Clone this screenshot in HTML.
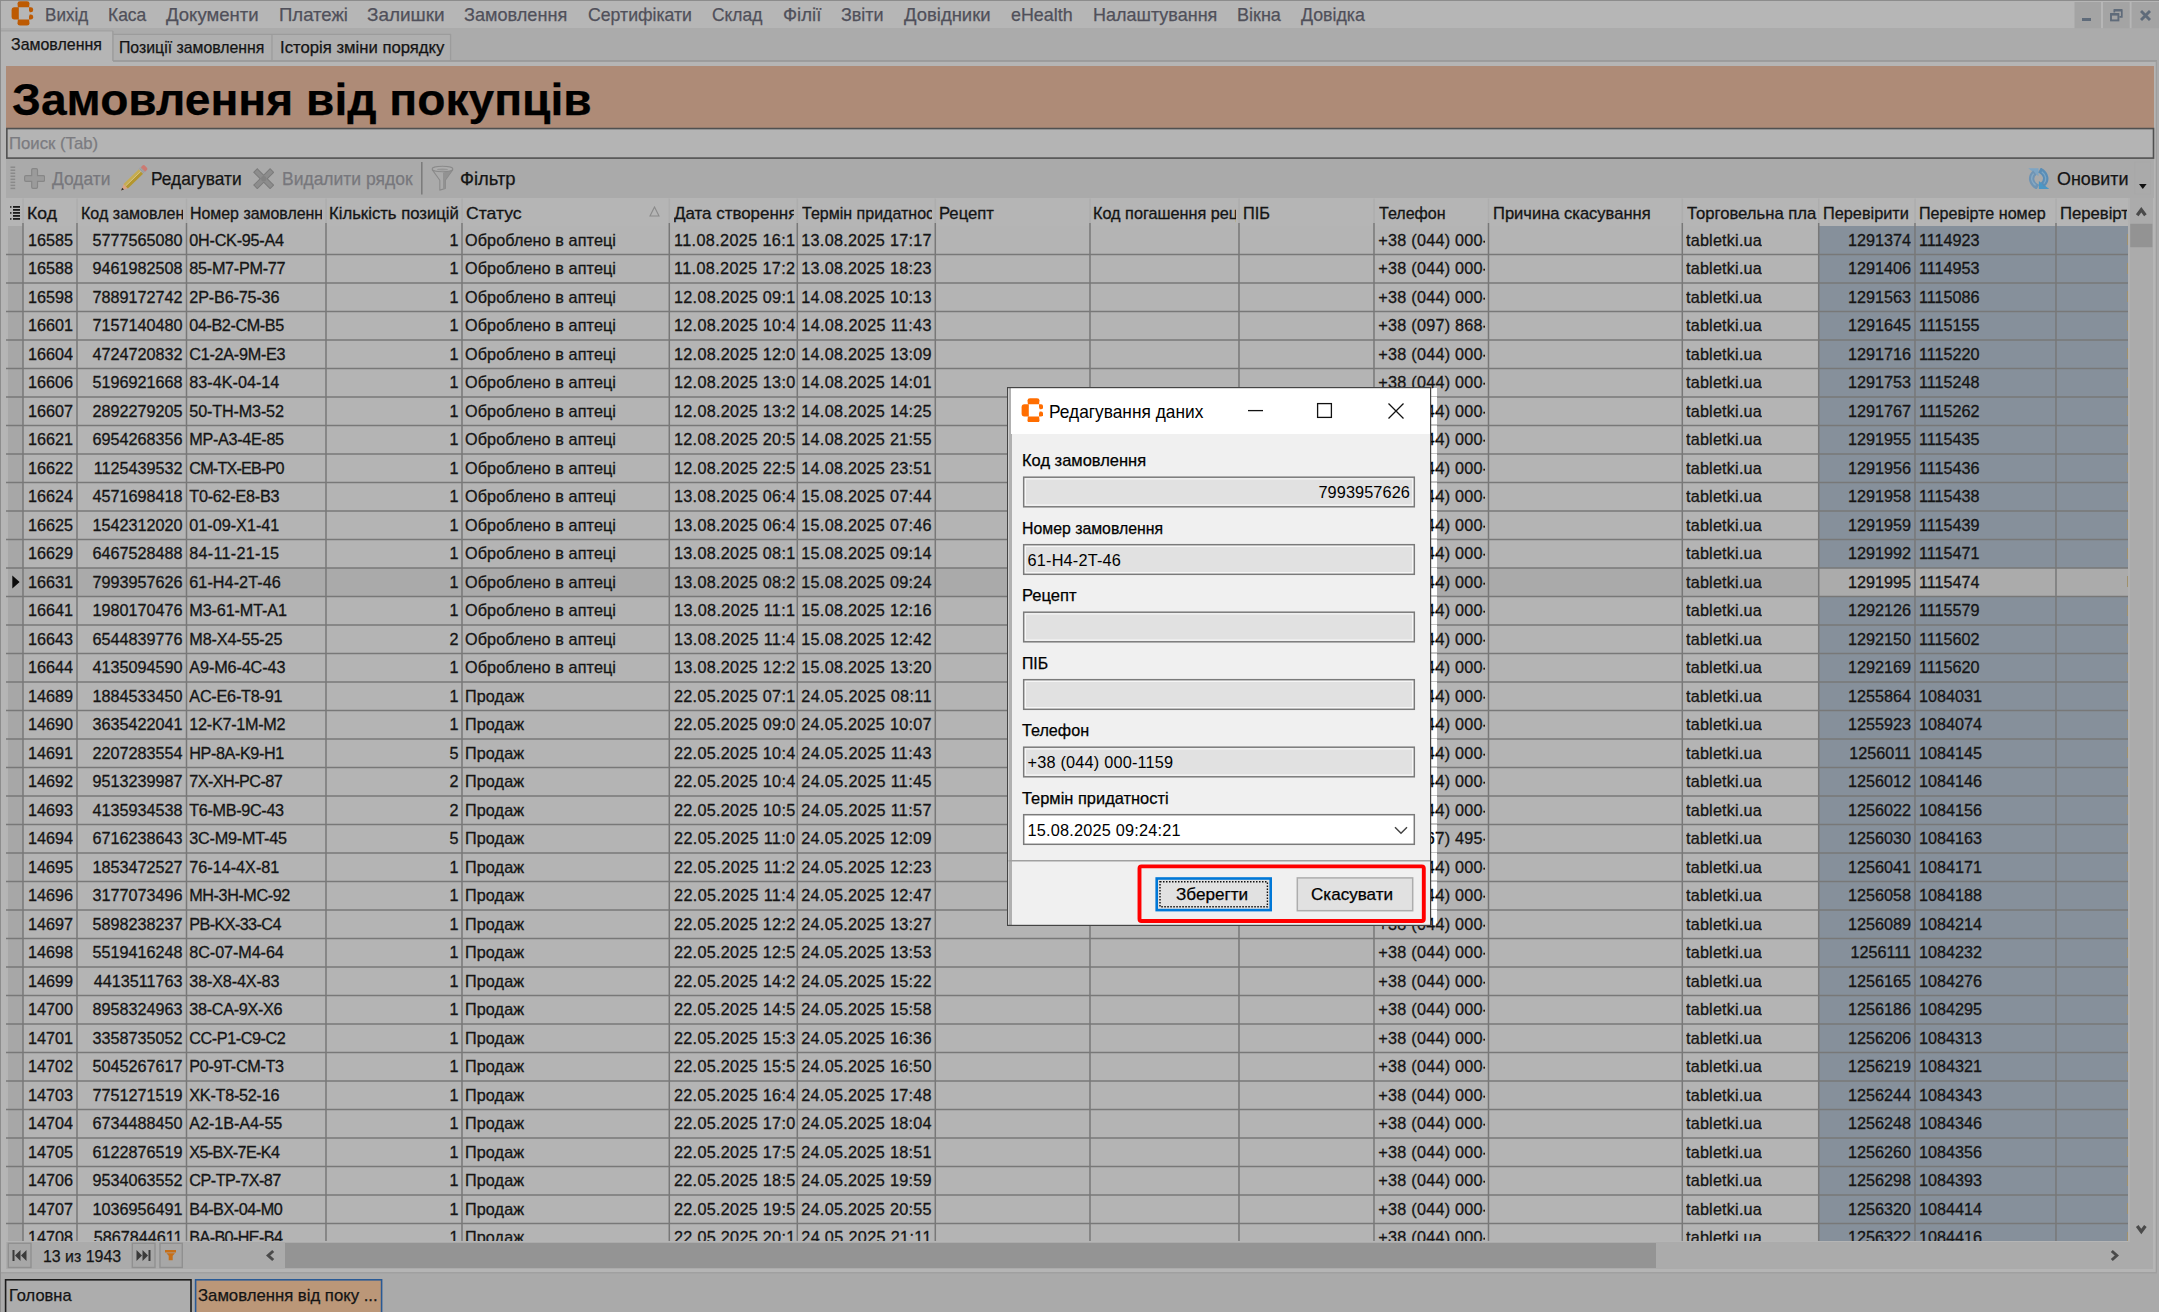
<!DOCTYPE html>
<html><head><meta charset="utf-8"><title>Замовлення від покупців</title>
<style>
html,body{margin:0;padding:0;}
body{width:2159px;height:1312px;overflow:hidden;background:#ababab;font-family:"Liberation Sans",sans-serif;color:#141414;position:relative;}
.a{position:absolute;white-space:pre;}
.t{-webkit-text-stroke:0.3px currentColor;position:absolute;white-space:pre;overflow:hidden;font-size:16.2px;line-height:20px;height:20px;transform:scaleY(1.035);transform-origin:0 55%;}
.r{text-align:right;}
.h{position:absolute;white-space:pre;font-size:16.2px;line-height:20px;overflow:hidden;height:22px;}
.lbl{position:absolute;white-space:pre;font-size:16.3px;line-height:20px;left:1022px;color:#000;}
.inp{position:absolute;left:1024px;width:390px;height:29px;box-sizing:border-box;background:#e1e1e1;font-size:16.3px;line-height:29px;color:#000;white-space:pre;}
</style></head><body>

<div class="a" style="left:0;top:0;width:2159px;height:28px;background:#b6b6b6"></div>
<svg class="a" style="left:11.4px;top:1.2px" width="22.4" height="24.8" viewBox="-0.2 -0.2 22.4 24.8"><g fill="#bd5a02">
<path d="M8.800 0h7q2.500 0 2.500 2.300L17.900 6.100H6.700L6.300 2.300Q6.300 0 8.800 0z"/>
<path d="M8.800 24.400h7q2.500 0 2.500-2.300l-0.400-3.800H6.700L6.300 22.100q0 2.300 2.500 2.300z"/>
<path d="M0.400 9q0-2.900 2.700-2.900h4.500v12.200H3.100Q0.400 18.300 0.400 15.400z"/>
<path d="M17.800 6.100h1.800q2.400 0 2.400 2.300v0.500q0 2.200-2.400 2.200h-1.100l-0.700-2z"/>
<path d="M17.800 18.300h1.800q2.400 0 2.400-2.300v-0.500q0-2.200-2.400-2.200h-1.100l-0.700 2z"/>
</g></svg>
<span class="a" style="left:44.90px;top:3.20px;font-size:18.4px;line-height:24px;color:#50505a;font-weight:400;transform:scaleX(0.9278);transform-origin:0 0;-webkit-text-stroke:0.25px currentColor;">Вихід</span>
<span class="a" style="left:107.50px;top:3.20px;font-size:18.4px;line-height:24px;color:#50505a;font-weight:400;transform:scaleX(0.9486);transform-origin:0 0;-webkit-text-stroke:0.25px currentColor;">Каса</span>
<span class="a" style="left:165.90px;top:3.20px;font-size:18.4px;line-height:24px;color:#50505a;font-weight:400;transform:scaleX(1.0081);transform-origin:0 0;-webkit-text-stroke:0.25px currentColor;">Документи</span>
<span class="a" style="left:278.50px;top:3.20px;font-size:18.4px;line-height:24px;color:#50505a;font-weight:400;transform:scaleX(1.0087);transform-origin:0 0;-webkit-text-stroke:0.25px currentColor;">Платежі</span>
<span class="a" style="left:366.50px;top:3.20px;font-size:18.4px;line-height:24px;color:#50505a;font-weight:400;transform:scaleX(1.0289);transform-origin:0 0;-webkit-text-stroke:0.25px currentColor;">Залишки</span>
<span class="a" style="left:464.20px;top:3.20px;font-size:18.4px;line-height:24px;color:#50505a;font-weight:400;transform:scaleX(0.9857);transform-origin:0 0;-webkit-text-stroke:0.25px currentColor;">Замовлення</span>
<span class="a" style="left:587.50px;top:3.20px;font-size:18.4px;line-height:24px;color:#50505a;font-weight:400;transform:scaleX(0.9610);transform-origin:0 0;-webkit-text-stroke:0.25px currentColor;">Сертифікати</span>
<span class="a" style="left:712.20px;top:3.20px;font-size:18.4px;line-height:24px;color:#50505a;font-weight:400;transform:scaleX(0.9449);transform-origin:0 0;-webkit-text-stroke:0.25px currentColor;">Склад</span>
<span class="a" style="left:782.50px;top:3.20px;font-size:18.4px;line-height:24px;color:#50505a;font-weight:400;transform:scaleX(1.0079);transform-origin:0 0;-webkit-text-stroke:0.25px currentColor;">Філії</span>
<span class="a" style="left:840.90px;top:3.20px;font-size:18.4px;line-height:24px;color:#50505a;font-weight:400;transform:scaleX(0.9755);transform-origin:0 0;-webkit-text-stroke:0.25px currentColor;">Звіти</span>
<span class="a" style="left:903.50px;top:3.20px;font-size:18.4px;line-height:24px;color:#50505a;font-weight:400;transform:scaleX(1.0042);transform-origin:0 0;-webkit-text-stroke:0.25px currentColor;">Довідники</span>
<span class="a" style="left:1010.90px;top:3.20px;font-size:18.4px;line-height:24px;color:#50505a;font-weight:400;transform:scaleX(0.9718);transform-origin:0 0;-webkit-text-stroke:0.25px currentColor;">eHealth</span>
<span class="a" style="left:1092.50px;top:3.20px;font-size:18.4px;line-height:24px;color:#50505a;font-weight:400;transform:scaleX(0.9779);transform-origin:0 0;-webkit-text-stroke:0.25px currentColor;">Налаштування</span>
<span class="a" style="left:1236.90px;top:3.20px;font-size:18.4px;line-height:24px;color:#50505a;font-weight:400;transform:scaleX(0.9800);transform-origin:0 0;-webkit-text-stroke:0.25px currentColor;">Вікна</span>
<span class="a" style="left:1300.90px;top:3.20px;font-size:18.4px;line-height:24px;color:#50505a;font-weight:400;transform:scaleX(0.9659);transform-origin:0 0;-webkit-text-stroke:0.25px currentColor;">Довідка</span>
<svg class="a" style="left:0;top:0;pointer-events:none" width="2159" height="1312" viewBox="0 0 2159 1312" fill="none"><path d="M0 0.4H2159" stroke="#8c8c8c" stroke-width="1.2"/><path d="M0.4 0V1312" stroke="#8a8a8a" stroke-width="1.0"/><rect x="2074.5" y="2" width="26.5" height="26.2" stroke="none" stroke-width="0" fill="#a4a4a4" rx="0"/><rect x="2103" y="2" width="26.699999999999818" height="26.2" stroke="none" stroke-width="0" fill="#a4a4a4" rx="0"/><rect x="2131.6" y="2" width="27.40000000000009" height="26.2" stroke="none" stroke-width="0" fill="#a4a4a4" rx="0"/></svg>
<div class="a" style="left:2082px;top:17.5px;width:9px;height:3px;background:#5f6b7a"></div>
<svg class="a" style="left:2110px;top:8.500px" width="13" height="13" viewBox="0 0 13 13" fill="none" stroke="#5f6b7a">
<path d="M4.300 3.600V1.200h7.5v6.600H9.400" stroke-width="1.700"/><path d="M4 1.300h8" stroke-width="2.400"/><rect x="1" y="5" width="7.400" height="6.400" stroke-width="1.900"/><path d="M0.500 5.400h8.400" stroke-width="2.400"/></svg>
<svg class="a" style="left:2140px;top:10px" width="11" height="11" viewBox="0 0 11 11" stroke="#5f6b7a" stroke-width="2.900"><path d="M1 1l9 9M10 1L1 10"/></svg>
<div class="a" style="left:1px;top:61px;width:2155.5px;height:1211px;background:#b5b5b5"></div>
<div class="a" style="left:1px;top:31px;width:112px;height:32px;background:#b5b5b5"></div>
<div class="a" style="left:113.5px;top:35px;width:337px;height:25.5px;background:#afafaf"></div>
<span class="a" style="left:11.10px;top:34.90px;font-size:15.7px;line-height:20px;color:#141414;font-weight:400;transform:scaleX(1.0169);transform-origin:0 0;-webkit-text-stroke:0.25px currentColor;">Замовлення</span>
<span class="a" style="left:118.50px;top:38.10px;font-size:15.7px;line-height:20px;color:#141414;font-weight:400;transform:scaleX(1.0085);transform-origin:0 0;-webkit-text-stroke:0.25px currentColor;">Позиції замовлення</span>
<span class="a" style="left:280.40px;top:38.10px;font-size:15.7px;line-height:20px;color:#141414;font-weight:400;transform:scaleX(1.0638);transform-origin:0 0;-webkit-text-stroke:0.25px currentColor;">Історія зміни порядку</span>
<div class="a" style="left:6px;top:66px;width:2148px;height:62px;background:#ae8b77"></div>
<span class="a" style="left:11.80px;top:73.60px;font-size:44.7px;line-height:52px;color:#000;font-weight:700;transform:scaleX(1.0330);transform-origin:0 0;-webkit-text-stroke:0.25px currentColor;">Замовлення від покупців</span>
<div class="a" style="left:6px;top:128px;width:2148px;height:30px;background:#b4b4b4"></div>
<svg class="a" style="left:0;top:0;pointer-events:none" width="2159" height="1312" viewBox="0 0 2159 1312" fill="none"><path d="M113 60.9H2157" stroke="#969696" stroke-width="1.5"/><path d="M2156.4 61V1272" stroke="#9e9e9e" stroke-width="1.4"/><path d="M1 1272.8H2157" stroke="#a0a0a0" stroke-width="1.5"/><path d="M1 30.9H113" stroke="#a2a2a2" stroke-width="1.2"/><path d="M112.9 31V61" stroke="#9a9a9a" stroke-width="1.3"/><path d="M113 34.4H451" stroke="#9c9c9c" stroke-width="1.3"/><path d="M272 34V61" stroke="#9c9c9c" stroke-width="1.3"/><path d="M450.6 34V61" stroke="#9c9c9c" stroke-width="1.3"/><rect x="6.85" y="128.55" width="2146.65" height="29.549999999999983" stroke="#505050" stroke-width="1.6" fill="none" rx="0"/></svg>
<span class="a" style="left:9.20px;top:132.70px;font-size:16.2px;line-height:20px;color:#7b7b80;font-weight:400;transform:scaleX(1.0332);transform-origin:0 0;-webkit-text-stroke:0.25px currentColor;">Поиск (Tab)</span>
<div class="a" style="left:6px;top:158.7px;width:2148px;height:39px;background:#aaaaaa"></div>
<svg class="a" style="left:23.800px;top:167.900px" width="21.200" height="21" viewBox="0 0 21.200 21"><path d="M9 0.600h3.200q1.300 0 1.300 1.300v5.800h5.800q1.300 0 1.300 1.300v3q0 1.300-1.300 1.300h-5.800v5.800q0 1.300-1.300 1.300H9q-1.300 0-1.300-1.300v-5.800H1.900q-1.300 0-1.300-1.300V9q0-1.300 1.300-1.300h5.800V1.900Q7.700 0.600 9 0.600z" fill="#9b9b9b" stroke="#878787" stroke-width="1.200"/></svg>
<span class="a" style="left:52.40px;top:166.00px;font-size:18.0px;line-height:26px;color:#77777c;font-weight:400;transform:scaleX(0.9663);transform-origin:0 0;-webkit-text-stroke:0.25px currentColor;">Додати</span>
<svg class="a" style="left:116px;top:162px" width="36" height="34" viewBox="116 162 36 34"><g transform="translate(121.100 190.600) rotate(-43.900)">
<path d="M0 0L6.500 -3V3z" fill="#dba383"/><path d="M0 0L2.800 -1.300V1.300z" fill="#2e2e2e"/>
<rect x="6.400" y="-3.100" width="21.200" height="3.100" fill="#c6ad52"/><rect x="6.400" y="0" width="21.200" height="3.100" fill="#b4962e"/>
<path d="M6.400 -0.200H27.600" stroke="#d8c682" stroke-width="0.900"/>
<rect x="27.500" y="-3.100" width="3" height="6.200" fill="#a9a9a9"/><path d="M28.500 -3.100v6.200M29.800 -3.100v6.200" stroke="#8d8d8d" stroke-width="0.600"/>
<path d="M30.400 -3.100h2.400q1.700 0 1.700 1.700v2.800q0 1.700-1.700 1.700h-2.400z" fill="#cc7a72"/>
</g></svg>
<span class="a" style="left:151.20px;top:166.00px;font-size:18.0px;line-height:26px;color:#141414;font-weight:400;transform:scaleX(0.9619);transform-origin:0 0;-webkit-text-stroke:0.25px currentColor;">Редагувати</span>
<svg class="a" style="left:253.100px;top:167.800px" width="21.400" height="21.400" viewBox="0 0 21.400 21.400"><path d="M4.300 4.300L17.100 17.100M17.100 4.300L4.300 17.100" stroke="#7c7c7c" stroke-width="6" stroke-linecap="square"/><path d="M4.300 4.300L17.100 17.100M17.100 4.300L4.300 17.100" stroke="#8d8d8d" stroke-width="4" stroke-linecap="square"/><circle cx="10.700" cy="10.700" r="2.600" fill="#828282"/></svg>
<span class="a" style="left:282.20px;top:166.00px;font-size:18.0px;line-height:26px;color:#77777c;font-weight:400;transform:scaleX(0.9718);transform-origin:0 0;-webkit-text-stroke:0.25px currentColor;">Видалити рядок</span>
<svg class="a" style="left:430px;top:164px" width="26" height="28" viewBox="430 164 26 28">
<path d="M432.200 169.600L439.800 180.300V190.100L445.300 188.500V180.300L452.800 169.600" fill="#aaaaaa" stroke="#8a8a8a" stroke-width="1.100" stroke-linejoin="round"/>
<path d="M443 172.400L452.200 170.500 445.300 180.300V188.300L443 188.900z" fill="#8e8e8e" opacity=".85"/>
<ellipse cx="442.500" cy="169" rx="10.400" ry="2.700" fill="#adadad" stroke="#8a8a8a" stroke-width="1.100"/>
<ellipse cx="442.500" cy="169.500" rx="5.400" ry="0.900" fill="#969696"/>
</svg>
<span class="a" style="left:460.20px;top:166.00px;font-size:18.0px;line-height:26px;color:#141414;font-weight:400;transform:scaleX(1.0216);transform-origin:0 0;-webkit-text-stroke:0.25px currentColor;">Фільтр</span>
<svg class="a" style="left:2027.800px;top:167.900px" width="21.400" height="21.400" viewBox="0 0 21.400 21.400">
<g><path d="M0.300 0.300H10.500V8.200z" fill="#7da5c4"/><path d="M6.800 4.600C2 8.400 2.400 15.200 9.900 19.200" stroke="#6f94b4" stroke-width="5.400" fill="none"/><path d="M5.600 5.600C2.600 9 3 14 7.600 17.400" stroke="#86a9c4" stroke-width="1.400" fill="none"/></g>
<g transform="rotate(180 10.700 10.600)"><path d="M0.300 0.300H10.500V8.200z" fill="#4a97c6"/><path d="M6.800 4.600C2 8.400 2.400 15.200 9.900 19.200" stroke="#5a8db6" stroke-width="5.400" fill="none"/><path d="M5.600 5.600C2.600 9 3 14 7.600 17.400" stroke="#7aa6c6" stroke-width="1.400" fill="none"/></g>
</svg>
<span class="a" style="left:2057.20px;top:166.00px;font-size:18.0px;line-height:26px;color:#141414;font-weight:400;transform:scaleX(0.9962);transform-origin:0 0;-webkit-text-stroke:0.25px currentColor;">Оновити</span>
<svg class="a" style="left:0;top:0;pointer-events:none" width="2159" height="1312" viewBox="0 0 2159 1312" fill="none"><path d="M10.5 167.2H15.2" stroke="#8a8a8a" stroke-width="1.5"/><path d="M10.5 170.23H15.2" stroke="#8a8a8a" stroke-width="1.5"/><path d="M10.5 173.26H15.2" stroke="#8a8a8a" stroke-width="1.5"/><path d="M10.5 176.29H15.2" stroke="#8a8a8a" stroke-width="1.5"/><path d="M10.5 179.32H15.2" stroke="#8a8a8a" stroke-width="1.5"/><path d="M10.5 182.35H15.2" stroke="#8a8a8a" stroke-width="1.5"/><path d="M10.5 185.38H15.2" stroke="#8a8a8a" stroke-width="1.5"/><path d="M10.5 188.41H15.2" stroke="#8a8a8a" stroke-width="1.5"/><path d="M421.8 162V194.5" stroke="#7a7a7a" stroke-width="1.5"/><rect x="2134.8" y="162" width="15.899999999999636" height="32" stroke="#a8a8a8" stroke-width="1" fill="none" rx="0"/><path d="M2139 184h7.600L2142.800 189z" fill="#111"/></svg>
<div class="a" style="left:6px;top:197.5px;width:2122.3px;height:1043.5px;background:#b4b4b4;overflow:hidden" id="grid">
<div class="a" style="left:0;top:0;width:2122.3px;height:28.099999999999994px;background:#b5b5b5"></div>
<div class="a" style="left:1.5px;top:28.099999999999994px;width:15px;height:1015.4px;background:#a7a7a7"></div>
<div class="a" style="left:1813px;top:28.099999999999994px;width:309.3000000000002px;height:1015.4px;background:#86909b"></div>
<div class="a" style="left:17px;top:370.1px;width:1796px;height:28.5px;background:#aaaaaa"></div>
<div class="a" style="left:1813px;top:370.1px;width:309.3000000000002px;height:28.5px;background:#ababab"></div>
<svg class="a" style="left:0;top:0" width="2122.3" height="1043.5" viewBox="0 0 2122.3 1043.5" fill="none" stroke="#787878" stroke-width="1.5"><path d="M0 56.60H2122.3M0 85.10H2122.3M0 113.60H2122.3M0 142.10H2122.3M0 170.60H2122.3M0 199.10H2122.3M0 227.60H2122.3M0 256.10H2122.3M0 284.60H2122.3M0 313.10H2122.3M0 341.60H2122.3M0 370.10H2122.3M0 398.60H2122.3M0 427.10H2122.3M0 455.60H2122.3M0 484.10H2122.3M0 512.60H2122.3M0 541.10H2122.3M0 569.60H2122.3M0 598.10H2122.3M0 626.60H2122.3M0 655.10H2122.3M0 683.60H2122.3M0 712.10H2122.3M0 740.60H2122.3M0 769.10H2122.3M0 797.60H2122.3M0 826.10H2122.3M0 854.60H2122.3M0 883.10H2122.3M0 911.60H2122.3M0 940.10H2122.3M0 968.60H2122.3M0 997.10H2122.3M0 1025.60H2122.3M0 1054.10H2122.3M17.00 25.10V1043.5M71.00 25.10V1043.5M180.50 25.10V1043.5M320.00 25.10V1043.5M456.00 25.10V1043.5M663.30 25.10V1043.5M791.30 25.10V1043.5M929.30 25.10V1043.5M1084.00 25.10V1043.5M1233.00 25.10V1043.5M1368.00 25.10V1043.5M1482.50 25.10V1043.5M1676.30 25.10V1043.5M1812.70 25.10V1043.5M1909.00 25.10V1043.5M2050.00 25.10V1043.5"/><path d="M17.00 0.5V25.10M71.00 0.5V25.10M180.50 0.5V25.10M320.00 0.5V25.10M456.00 0.5V25.10M663.30 0.5V25.10M791.30 0.5V25.10M929.30 0.5V25.10M1084.00 0.5V25.10M1233.00 0.5V25.10M1368.00 0.5V25.10M1482.50 0.5V25.10M1676.30 0.5V25.10M1812.70 0.5V25.10M1909.00 0.5V25.10M2050.00 0.5V25.10" stroke="#adadad" stroke-width="1.5"/></svg>
<div class="a" style="left:20.90px;top:5.199999999999989px;width:32.10px;height:22px;overflow:hidden"><span class="a" style="left:0;top:0;font-size:16.2px;line-height:20px;transform:scale(1.0860,1.035);transform-origin:0 55%;-webkit-text-stroke:0.3px currentColor">Код</span></div>
<div class="a" style="left:74.90px;top:5.199999999999989px;width:101.70px;height:22px;overflow:hidden"><span class="a" style="left:0;top:0;font-size:16.2px;line-height:20px;transform:scale(0.9923,1.035);transform-origin:0 55%;-webkit-text-stroke:0.3px currentColor">Код замовлен</span></div>
<div class="a" style="left:184.20px;top:5.199999999999989px;width:131.40px;height:22px;overflow:hidden"><span class="a" style="left:0;top:0;font-size:16.2px;line-height:20px;transform:scale(0.9827,1.035);transform-origin:0 55%;-webkit-text-stroke:0.3px currentColor">Номер замовленн</span></div>
<div class="a" style="left:323.20px;top:5.199999999999989px;width:132.10px;height:22px;overflow:hidden"><span class="a" style="left:0;top:0;font-size:16.2px;line-height:20px;transform:scale(1.0311,1.035);transform-origin:0 55%;-webkit-text-stroke:0.3px currentColor">Кількість позицій</span></div>
<div class="a" style="left:459.90px;top:5.199999999999989px;width:57.80px;height:22px;overflow:hidden"><span class="a" style="left:0;top:0;font-size:16.2px;line-height:20px;transform:scale(1.0865,1.035);transform-origin:0 55%;-webkit-text-stroke:0.3px currentColor">Статус</span></div>
<div class="a" style="left:668.00px;top:5.199999999999989px;width:119.60px;height:22px;overflow:hidden"><span class="a" style="left:0;top:0;font-size:16.2px;line-height:20px;transform:scale(1.0456,1.035);transform-origin:0 55%;-webkit-text-stroke:0.3px currentColor">Дата створення</span></div>
<div class="a" style="left:795.70px;top:5.199999999999989px;width:130.00px;height:22px;overflow:hidden"><span class="a" style="left:0;top:0;font-size:16.2px;line-height:20px;transform:scale(0.9895,1.035);transform-origin:0 55%;-webkit-text-stroke:0.3px currentColor">Термін придатнос</span></div>
<div class="a" style="left:932.80px;top:5.199999999999989px;width:57.10px;height:22px;overflow:hidden"><span class="a" style="left:0;top:0;font-size:16.2px;line-height:20px;transform:scale(1.0286,1.035);transform-origin:0 55%;-webkit-text-stroke:0.3px currentColor">Рецепт</span></div>
<div class="a" style="left:1087.20px;top:5.199999999999989px;width:142.80px;height:22px;overflow:hidden"><span class="a" style="left:0;top:0;font-size:16.2px;line-height:20px;transform:scale(1.0024,1.035);transform-origin:0 55%;-webkit-text-stroke:0.3px currentColor">Код погашення рец</span></div>
<div class="a" style="left:1237.20px;top:5.199999999999989px;width:29.10px;height:22px;overflow:hidden"><span class="a" style="left:0;top:0;font-size:16.2px;line-height:20px;transform:scale(1.0050,1.035);transform-origin:0 55%;-webkit-text-stroke:0.3px currentColor">ПІБ</span></div>
<div class="a" style="left:1373.20px;top:5.199999999999989px;width:68.80px;height:22px;overflow:hidden"><span class="a" style="left:0;top:0;font-size:16.2px;line-height:20px;transform:scale(0.9917,1.035);transform-origin:0 55%;-webkit-text-stroke:0.3px currentColor">Телефон</span></div>
<div class="a" style="left:1486.50px;top:5.199999999999989px;width:159.80px;height:22px;overflow:hidden"><span class="a" style="left:0;top:0;font-size:16.2px;line-height:20px;transform:scale(1.0208,1.035);transform-origin:0 55%;-webkit-text-stroke:0.3px currentColor">Причина скасування</span></div>
<div class="a" style="left:1680.50px;top:5.199999999999989px;width:131.50px;height:22px;overflow:hidden"><span class="a" style="left:0;top:0;font-size:16.2px;line-height:20px;transform:scale(1.0295,1.035);transform-origin:0 55%;-webkit-text-stroke:0.3px currentColor">Торговельна пла</span></div>
<div class="a" style="left:1817.20px;top:5.199999999999989px;width:88.10px;height:22px;overflow:hidden"><span class="a" style="left:0;top:0;font-size:16.2px;line-height:20px;transform:scale(1.0065,1.035);transform-origin:0 55%;-webkit-text-stroke:0.3px currentColor">Перевірити</span></div>
<div class="a" style="left:1913.20px;top:5.199999999999989px;width:128.80px;height:22px;overflow:hidden"><span class="a" style="left:0;top:0;font-size:16.2px;line-height:20px;transform:scale(0.9945,1.035);transform-origin:0 55%;-webkit-text-stroke:0.3px currentColor">Перевірте номер</span></div>
<div class="a" style="left:2053.90px;top:5.199999999999989px;width:67.40px;height:22px;overflow:hidden"><span class="a" style="left:0;top:0;font-size:16.2px;line-height:20px;transform:scale(1.0298,1.035);transform-origin:0 55%;-webkit-text-stroke:0.3px currentColor">Перевірт</span></div>
<svg class="a" style="left:4px;top:8.5px" width="11" height="14" viewBox="0 0 11 14" fill="#1a1a1a"><rect x="3" y="0" width="7" height="1.800"/><rect x="3" y="3" width="7" height="1.800"/><rect x="3" y="6" width="7" height="1.800"/><rect x="3" y="9" width="7" height="1.800"/><rect x="3" y="12" width="7" height="1.800"/><rect x="0" y="0.200" width="1.500" height="1.500"/><rect x="0" y="6.200" width="1.500" height="1.500"/><rect x="0" y="12.200" width="1.500" height="1.500"/></svg>
<svg class="a" style="left:643px;top:8.5px" width="11" height="11" viewBox="0 0 11 11"><path d="M5.500 1L10 10H1z" fill="none" stroke="#8a8a8a" stroke-width="1.100"/></svg>
<span class="t r" style="left:19.0px;top:32.0px;width:48px">16585</span>
<span class="t r" style="left:73.0px;top:32.0px;width:103.5px">5777565080</span>
<span class="t" style="left:183.3px;top:32.0px;width:136px;letter-spacing:-0.243px">0H-CK-95-A4</span>
<span class="t r" style="left:322.0px;top:32.0px;width:130.5px">1</span>
<span class="t" style="left:459.0px;top:32.0px;width:200px;letter-spacing:0.1px">Оброблено в аптеці</span>
<span class="t" style="left:668.0px;top:32.0px;width:122.5px;letter-spacing:0.378px">11.08.2025 16:1</span>
<span class="t" style="left:795.3px;top:32.0px;width:134px;letter-spacing:0.279px">13.08.2025 17:17</span>
<span class="t" style="left:1372.3px;top:32.0px;width:106.6px;overflow:hidden;letter-spacing:0.25px">+38 (044) 000-</span>
<span class="t" style="left:1680.0px;top:32.0px;width:130px;letter-spacing:0.2px">tabletki.ua</span>
<span class="t r" style="left:1815.0px;top:32.0px;width:90px">1291374</span>
<span class="t" style="left:1913.0px;top:32.0px;width:130px">1114923</span>
<div class="a" style="left:2120.9px;top:36.8px;width:1.4px;height:11px;background:#a0916c"></div>
<span class="t r" style="left:19.0px;top:60.6px;width:48px">16588</span>
<span class="t r" style="left:73.0px;top:60.6px;width:103.5px">9461982508</span>
<span class="t" style="left:183.3px;top:60.6px;width:136px;letter-spacing:-0.268px">85-M7-PM-77</span>
<span class="t r" style="left:322.0px;top:60.6px;width:130.5px">1</span>
<span class="t" style="left:459.0px;top:60.6px;width:200px;letter-spacing:0.1px">Оброблено в аптеці</span>
<span class="t" style="left:668.0px;top:60.6px;width:122.5px;letter-spacing:0.378px">11.08.2025 17:2</span>
<span class="t" style="left:795.3px;top:60.6px;width:134px;letter-spacing:0.279px">13.08.2025 18:23</span>
<span class="t" style="left:1372.3px;top:60.6px;width:106.6px;overflow:hidden;letter-spacing:0.25px">+38 (044) 000-</span>
<span class="t" style="left:1680.0px;top:60.6px;width:130px;letter-spacing:0.2px">tabletki.ua</span>
<span class="t r" style="left:1815.0px;top:60.6px;width:90px">1291406</span>
<span class="t" style="left:1913.0px;top:60.6px;width:130px">1114953</span>
<div class="a" style="left:2120.9px;top:65.4px;width:1.4px;height:11px;background:#a0916c"></div>
<span class="t r" style="left:19.0px;top:89.1px;width:48px">16598</span>
<span class="t r" style="left:73.0px;top:89.1px;width:103.5px">7889172742</span>
<span class="t" style="left:183.3px;top:89.1px;width:136px;letter-spacing:-0.163px">2P-B6-75-36</span>
<span class="t r" style="left:322.0px;top:89.1px;width:130.5px">1</span>
<span class="t" style="left:459.0px;top:89.1px;width:200px;letter-spacing:0.1px">Оброблено в аптеці</span>
<span class="t" style="left:668.0px;top:89.1px;width:122.5px;letter-spacing:0.298px">12.08.2025 09:1</span>
<span class="t" style="left:795.3px;top:89.1px;width:134px;letter-spacing:0.279px">14.08.2025 10:13</span>
<span class="t" style="left:1372.3px;top:89.1px;width:106.6px;overflow:hidden;letter-spacing:0.25px">+38 (044) 000-</span>
<span class="t" style="left:1680.0px;top:89.1px;width:130px;letter-spacing:0.2px">tabletki.ua</span>
<span class="t r" style="left:1815.0px;top:89.1px;width:90px">1291563</span>
<span class="t" style="left:1913.0px;top:89.1px;width:130px">1115086</span>
<div class="a" style="left:2120.9px;top:93.9px;width:1.4px;height:11px;background:#a0916c"></div>
<span class="t r" style="left:19.0px;top:117.6px;width:48px">16601</span>
<span class="t r" style="left:73.0px;top:117.6px;width:103.5px">7157140480</span>
<span class="t" style="left:183.3px;top:117.6px;width:136px;letter-spacing:-0.405px">04-B2-CM-B5</span>
<span class="t r" style="left:322.0px;top:117.6px;width:130.5px">1</span>
<span class="t" style="left:459.0px;top:117.6px;width:200px;letter-spacing:0.1px">Оброблено в аптеці</span>
<span class="t" style="left:668.0px;top:117.6px;width:122.5px;letter-spacing:0.298px">12.08.2025 10:4</span>
<span class="t" style="left:795.3px;top:117.6px;width:134px;letter-spacing:0.354px">14.08.2025 11:43</span>
<span class="t" style="left:1372.3px;top:117.6px;width:106.6px;overflow:hidden;letter-spacing:0.25px">+38 (097) 868-</span>
<span class="t" style="left:1680.0px;top:117.6px;width:130px;letter-spacing:0.2px">tabletki.ua</span>
<span class="t r" style="left:1815.0px;top:117.6px;width:90px">1291645</span>
<span class="t" style="left:1913.0px;top:117.6px;width:130px">1115155</span>
<div class="a" style="left:2120.9px;top:122.4px;width:1.4px;height:11px;background:#a0916c"></div>
<span class="t r" style="left:19.0px;top:146.1px;width:48px">16604</span>
<span class="t r" style="left:73.0px;top:146.1px;width:103.5px">4724720832</span>
<span class="t" style="left:183.3px;top:146.1px;width:136px;letter-spacing:-0.268px">C1-2A-9M-E3</span>
<span class="t r" style="left:322.0px;top:146.1px;width:130.5px">1</span>
<span class="t" style="left:459.0px;top:146.1px;width:200px;letter-spacing:0.1px">Оброблено в аптеці</span>
<span class="t" style="left:668.0px;top:146.1px;width:122.5px;letter-spacing:0.298px">12.08.2025 12:0</span>
<span class="t" style="left:795.3px;top:146.1px;width:134px;letter-spacing:0.279px">14.08.2025 13:09</span>
<span class="t" style="left:1372.3px;top:146.1px;width:106.6px;overflow:hidden;letter-spacing:0.25px">+38 (044) 000-</span>
<span class="t" style="left:1680.0px;top:146.1px;width:130px;letter-spacing:0.2px">tabletki.ua</span>
<span class="t r" style="left:1815.0px;top:146.1px;width:90px">1291716</span>
<span class="t" style="left:1913.0px;top:146.1px;width:130px">1115220</span>
<div class="a" style="left:2120.9px;top:150.9px;width:1.4px;height:11px;background:#a0916c"></div>
<span class="t r" style="left:19.0px;top:174.6px;width:48px">16606</span>
<span class="t r" style="left:73.0px;top:174.6px;width:103.5px">5196921668</span>
<span class="t" style="left:183.3px;top:174.6px;width:136px;letter-spacing:0.0px">83-4K-04-14</span>
<span class="t r" style="left:322.0px;top:174.6px;width:130.5px">1</span>
<span class="t" style="left:459.0px;top:174.6px;width:200px;letter-spacing:0.1px">Оброблено в аптеці</span>
<span class="t" style="left:668.0px;top:174.6px;width:122.5px;letter-spacing:0.298px">12.08.2025 13:0</span>
<span class="t" style="left:795.3px;top:174.6px;width:134px;letter-spacing:0.279px">14.08.2025 14:01</span>
<span class="t" style="left:1372.3px;top:174.6px;width:106.6px;overflow:hidden;letter-spacing:0.25px">+38 (044) 000-</span>
<span class="t" style="left:1680.0px;top:174.6px;width:130px;letter-spacing:0.2px">tabletki.ua</span>
<span class="t r" style="left:1815.0px;top:174.6px;width:90px">1291753</span>
<span class="t" style="left:1913.0px;top:174.6px;width:130px">1115248</span>
<div class="a" style="left:2120.9px;top:179.4px;width:1.4px;height:11px;background:#a0916c"></div>
<span class="t r" style="left:19.0px;top:203.1px;width:48px">16607</span>
<span class="t r" style="left:73.0px;top:203.1px;width:103.5px">2892279205</span>
<span class="t" style="left:183.3px;top:203.1px;width:136px;letter-spacing:-0.159px">50-TH-M3-52</span>
<span class="t r" style="left:322.0px;top:203.1px;width:130.5px">1</span>
<span class="t" style="left:459.0px;top:203.1px;width:200px;letter-spacing:0.1px">Оброблено в аптеці</span>
<span class="t" style="left:668.0px;top:203.1px;width:122.5px;letter-spacing:0.298px">12.08.2025 13:2</span>
<span class="t" style="left:795.3px;top:203.1px;width:134px;letter-spacing:0.279px">14.08.2025 14:25</span>
<span class="t" style="left:1372.3px;top:203.1px;width:106.6px;overflow:hidden;letter-spacing:0.25px">+38 (044) 000-</span>
<span class="t" style="left:1680.0px;top:203.1px;width:130px;letter-spacing:0.2px">tabletki.ua</span>
<span class="t r" style="left:1815.0px;top:203.1px;width:90px">1291767</span>
<span class="t" style="left:1913.0px;top:203.1px;width:130px">1115262</span>
<div class="a" style="left:2120.9px;top:207.9px;width:1.4px;height:11px;background:#a0916c"></div>
<span class="t r" style="left:19.0px;top:231.6px;width:48px">16621</span>
<span class="t r" style="left:73.0px;top:231.6px;width:103.5px">6954268356</span>
<span class="t" style="left:183.3px;top:231.6px;width:136px;letter-spacing:-0.324px">MP-A3-4E-85</span>
<span class="t r" style="left:322.0px;top:231.6px;width:130.5px">1</span>
<span class="t" style="left:459.0px;top:231.6px;width:200px;letter-spacing:0.1px">Оброблено в аптеці</span>
<span class="t" style="left:668.0px;top:231.6px;width:122.5px;letter-spacing:0.298px">12.08.2025 20:5</span>
<span class="t" style="left:795.3px;top:231.6px;width:134px;letter-spacing:0.279px">14.08.2025 21:55</span>
<span class="t" style="left:1372.3px;top:231.6px;width:106.6px;overflow:hidden;letter-spacing:0.25px">+38 (044) 000-</span>
<span class="t" style="left:1680.0px;top:231.6px;width:130px;letter-spacing:0.2px">tabletki.ua</span>
<span class="t r" style="left:1815.0px;top:231.6px;width:90px">1291955</span>
<span class="t" style="left:1913.0px;top:231.6px;width:130px">1115435</span>
<div class="a" style="left:2120.9px;top:236.4px;width:1.4px;height:11px;background:#a0916c"></div>
<span class="t r" style="left:19.0px;top:260.1px;width:48px">16622</span>
<span class="t r" style="left:73.0px;top:260.1px;width:103.5px">1125439532</span>
<span class="t" style="left:183.3px;top:260.1px;width:136px;letter-spacing:-0.812px">CM-TX-EB-P0</span>
<span class="t r" style="left:322.0px;top:260.1px;width:130.5px">1</span>
<span class="t" style="left:459.0px;top:260.1px;width:200px;letter-spacing:0.1px">Оброблено в аптеці</span>
<span class="t" style="left:668.0px;top:260.1px;width:122.5px;letter-spacing:0.298px">12.08.2025 22:5</span>
<span class="t" style="left:795.3px;top:260.1px;width:134px;letter-spacing:0.279px">14.08.2025 23:51</span>
<span class="t" style="left:1372.3px;top:260.1px;width:106.6px;overflow:hidden;letter-spacing:0.25px">+38 (044) 000-</span>
<span class="t" style="left:1680.0px;top:260.1px;width:130px;letter-spacing:0.2px">tabletki.ua</span>
<span class="t r" style="left:1815.0px;top:260.1px;width:90px">1291956</span>
<span class="t" style="left:1913.0px;top:260.1px;width:130px">1115436</span>
<div class="a" style="left:2120.9px;top:264.9px;width:1.4px;height:11px;background:#a0916c"></div>
<span class="t r" style="left:19.0px;top:288.6px;width:48px">16624</span>
<span class="t r" style="left:73.0px;top:288.6px;width:103.5px">4571698418</span>
<span class="t" style="left:183.3px;top:288.6px;width:136px;letter-spacing:-0.243px">T0-62-E8-B3</span>
<span class="t r" style="left:322.0px;top:288.6px;width:130.5px">1</span>
<span class="t" style="left:459.0px;top:288.6px;width:200px;letter-spacing:0.1px">Оброблено в аптеці</span>
<span class="t" style="left:668.0px;top:288.6px;width:122.5px;letter-spacing:0.298px">13.08.2025 06:4</span>
<span class="t" style="left:795.3px;top:288.6px;width:134px;letter-spacing:0.279px">15.08.2025 07:44</span>
<span class="t" style="left:1372.3px;top:288.6px;width:106.6px;overflow:hidden;letter-spacing:0.25px">+38 (044) 000-</span>
<span class="t" style="left:1680.0px;top:288.6px;width:130px;letter-spacing:0.2px">tabletki.ua</span>
<span class="t r" style="left:1815.0px;top:288.6px;width:90px">1291958</span>
<span class="t" style="left:1913.0px;top:288.6px;width:130px">1115438</span>
<div class="a" style="left:2120.9px;top:293.4px;width:1.4px;height:11px;background:#a0916c"></div>
<span class="t r" style="left:19.0px;top:317.1px;width:48px">16625</span>
<span class="t r" style="left:73.0px;top:317.1px;width:103.5px">1542312020</span>
<span class="t" style="left:183.3px;top:317.1px;width:136px;letter-spacing:0.0px">01-09-X1-41</span>
<span class="t r" style="left:322.0px;top:317.1px;width:130.5px">1</span>
<span class="t" style="left:459.0px;top:317.1px;width:200px;letter-spacing:0.1px">Оброблено в аптеці</span>
<span class="t" style="left:668.0px;top:317.1px;width:122.5px;letter-spacing:0.298px">13.08.2025 06:4</span>
<span class="t" style="left:795.3px;top:317.1px;width:134px;letter-spacing:0.279px">15.08.2025 07:46</span>
<span class="t" style="left:1372.3px;top:317.1px;width:106.6px;overflow:hidden;letter-spacing:0.25px">+38 (044) 000-</span>
<span class="t" style="left:1680.0px;top:317.1px;width:130px;letter-spacing:0.2px">tabletki.ua</span>
<span class="t r" style="left:1815.0px;top:317.1px;width:90px">1291959</span>
<span class="t" style="left:1913.0px;top:317.1px;width:130px">1115439</span>
<div class="a" style="left:2120.9px;top:321.9px;width:1.4px;height:11px;background:#a0916c"></div>
<span class="t r" style="left:19.0px;top:345.6px;width:48px">16629</span>
<span class="t r" style="left:73.0px;top:345.6px;width:103.5px">6467528488</span>
<span class="t" style="left:183.3px;top:345.6px;width:136px;letter-spacing:0.273px">84-11-21-15</span>
<span class="t r" style="left:322.0px;top:345.6px;width:130.5px">1</span>
<span class="t" style="left:459.0px;top:345.6px;width:200px;letter-spacing:0.1px">Оброблено в аптеці</span>
<span class="t" style="left:668.0px;top:345.6px;width:122.5px;letter-spacing:0.298px">13.08.2025 08:1</span>
<span class="t" style="left:795.3px;top:345.6px;width:134px;letter-spacing:0.279px">15.08.2025 09:14</span>
<span class="t" style="left:1372.3px;top:345.6px;width:106.6px;overflow:hidden;letter-spacing:0.25px">+38 (044) 000-</span>
<span class="t" style="left:1680.0px;top:345.6px;width:130px;letter-spacing:0.2px">tabletki.ua</span>
<span class="t r" style="left:1815.0px;top:345.6px;width:90px">1291992</span>
<span class="t" style="left:1913.0px;top:345.6px;width:130px">1115471</span>
<div class="a" style="left:2120.9px;top:350.4px;width:1.4px;height:11px;background:#a0916c"></div>
<span class="t r" style="left:19.0px;top:374.1px;width:48px">16631</span>
<span class="t r" style="left:73.0px;top:374.1px;width:103.5px">7993957626</span>
<span class="t" style="left:183.3px;top:374.1px;width:136px;letter-spacing:0.057px">61-H4-2T-46</span>
<span class="t r" style="left:322.0px;top:374.1px;width:130.5px">1</span>
<span class="t" style="left:459.0px;top:374.1px;width:200px;letter-spacing:0.1px">Оброблено в аптеці</span>
<span class="t" style="left:668.0px;top:374.1px;width:122.5px;letter-spacing:0.298px">13.08.2025 08:2</span>
<span class="t" style="left:795.3px;top:374.1px;width:134px;letter-spacing:0.279px">15.08.2025 09:24</span>
<span class="t" style="left:1372.3px;top:374.1px;width:106.6px;overflow:hidden;letter-spacing:0.25px">+38 (044) 000-</span>
<span class="t" style="left:1680.0px;top:374.1px;width:130px;letter-spacing:0.2px">tabletki.ua</span>
<span class="t r" style="left:1815.0px;top:374.1px;width:90px">1291995</span>
<span class="t" style="left:1913.0px;top:374.1px;width:130px">1115474</span>
<div class="a" style="left:2120.9px;top:378.9px;width:1.4px;height:11px;background:#a0916c"></div>
<span class="t r" style="left:19.0px;top:402.6px;width:48px">16641</span>
<span class="t r" style="left:73.0px;top:402.6px;width:103.5px">1980170476</span>
<span class="t" style="left:183.3px;top:402.6px;width:136px;letter-spacing:-0.132px">M3-61-MT-A1</span>
<span class="t r" style="left:322.0px;top:402.6px;width:130.5px">1</span>
<span class="t" style="left:459.0px;top:402.6px;width:200px;letter-spacing:0.1px">Оброблено в аптеці</span>
<span class="t" style="left:668.0px;top:402.6px;width:122.5px;letter-spacing:0.378px">13.08.2025 11:1</span>
<span class="t" style="left:795.3px;top:402.6px;width:134px;letter-spacing:0.279px">15.08.2025 12:16</span>
<span class="t" style="left:1372.3px;top:402.6px;width:106.6px;overflow:hidden;letter-spacing:0.25px">+38 (044) 000-</span>
<span class="t" style="left:1680.0px;top:402.6px;width:130px;letter-spacing:0.2px">tabletki.ua</span>
<span class="t r" style="left:1815.0px;top:402.6px;width:90px">1292126</span>
<span class="t" style="left:1913.0px;top:402.6px;width:130px">1115579</span>
<div class="a" style="left:2120.9px;top:407.4px;width:1.4px;height:11px;background:#a0916c"></div>
<span class="t r" style="left:19.0px;top:431.1px;width:48px">16643</span>
<span class="t r" style="left:73.0px;top:431.1px;width:103.5px">6544839776</span>
<span class="t" style="left:183.3px;top:431.1px;width:136px;letter-spacing:-0.135px">M8-X4-55-25</span>
<span class="t r" style="left:322.0px;top:431.1px;width:130.5px">2</span>
<span class="t" style="left:459.0px;top:431.1px;width:200px;letter-spacing:0.1px">Оброблено в аптеці</span>
<span class="t" style="left:668.0px;top:431.1px;width:122.5px;letter-spacing:0.378px">13.08.2025 11:4</span>
<span class="t" style="left:795.3px;top:431.1px;width:134px;letter-spacing:0.279px">15.08.2025 12:42</span>
<span class="t" style="left:1372.3px;top:431.1px;width:106.6px;overflow:hidden;letter-spacing:0.25px">+38 (044) 000-</span>
<span class="t" style="left:1680.0px;top:431.1px;width:130px;letter-spacing:0.2px">tabletki.ua</span>
<span class="t r" style="left:1815.0px;top:431.1px;width:90px">1292150</span>
<span class="t" style="left:1913.0px;top:431.1px;width:130px">1115602</span>
<div class="a" style="left:2120.9px;top:435.9px;width:1.4px;height:11px;background:#a0916c"></div>
<span class="t r" style="left:19.0px;top:459.6px;width:48px">16644</span>
<span class="t r" style="left:73.0px;top:459.6px;width:103.5px">4135094590</span>
<span class="t" style="left:183.3px;top:459.6px;width:136px;letter-spacing:-0.107px">A9-M6-4C-43</span>
<span class="t r" style="left:322.0px;top:459.6px;width:130.5px">1</span>
<span class="t" style="left:459.0px;top:459.6px;width:200px;letter-spacing:0.1px">Оброблено в аптеці</span>
<span class="t" style="left:668.0px;top:459.6px;width:122.5px;letter-spacing:0.298px">13.08.2025 12:2</span>
<span class="t" style="left:795.3px;top:459.6px;width:134px;letter-spacing:0.279px">15.08.2025 13:20</span>
<span class="t" style="left:1372.3px;top:459.6px;width:106.6px;overflow:hidden;letter-spacing:0.25px">+38 (044) 000-</span>
<span class="t" style="left:1680.0px;top:459.6px;width:130px;letter-spacing:0.2px">tabletki.ua</span>
<span class="t r" style="left:1815.0px;top:459.6px;width:90px">1292169</span>
<span class="t" style="left:1913.0px;top:459.6px;width:130px">1115620</span>
<div class="a" style="left:2120.9px;top:464.4px;width:1.4px;height:11px;background:#a0916c"></div>
<span class="t r" style="left:19.0px;top:488.1px;width:48px">14689</span>
<span class="t r" style="left:73.0px;top:488.1px;width:103.5px">1884533450</span>
<span class="t" style="left:183.3px;top:488.1px;width:136px;letter-spacing:-0.214px">AC-E6-T8-91</span>
<span class="t r" style="left:322.0px;top:488.1px;width:130.5px">1</span>
<span class="t" style="left:459.0px;top:488.1px;width:200px;letter-spacing:0.1px">Продаж</span>
<span class="t" style="left:668.0px;top:488.1px;width:122.5px;letter-spacing:0.298px">22.05.2025 07:1</span>
<span class="t" style="left:795.3px;top:488.1px;width:134px;letter-spacing:0.354px">24.05.2025 08:11</span>
<span class="t" style="left:1372.3px;top:488.1px;width:106.6px;overflow:hidden;letter-spacing:0.25px">+38 (044) 000-</span>
<span class="t" style="left:1680.0px;top:488.1px;width:130px;letter-spacing:0.2px">tabletki.ua</span>
<span class="t r" style="left:1815.0px;top:488.1px;width:90px">1255864</span>
<span class="t" style="left:1913.0px;top:488.1px;width:130px">1084031</span>
<div class="a" style="left:2120.9px;top:492.9px;width:1.4px;height:11px;background:#a0916c"></div>
<span class="t r" style="left:19.0px;top:516.6px;width:48px">14690</span>
<span class="t r" style="left:73.0px;top:516.6px;width:103.5px">3635422041</span>
<span class="t" style="left:183.3px;top:516.6px;width:136px;letter-spacing:-0.268px">12-K7-1M-M2</span>
<span class="t r" style="left:322.0px;top:516.6px;width:130.5px">1</span>
<span class="t" style="left:459.0px;top:516.6px;width:200px;letter-spacing:0.1px">Продаж</span>
<span class="t" style="left:668.0px;top:516.6px;width:122.5px;letter-spacing:0.298px">22.05.2025 09:0</span>
<span class="t" style="left:795.3px;top:516.6px;width:134px;letter-spacing:0.279px">24.05.2025 10:07</span>
<span class="t" style="left:1372.3px;top:516.6px;width:106.6px;overflow:hidden;letter-spacing:0.25px">+38 (044) 000-</span>
<span class="t" style="left:1680.0px;top:516.6px;width:130px;letter-spacing:0.2px">tabletki.ua</span>
<span class="t r" style="left:1815.0px;top:516.6px;width:90px">1255923</span>
<span class="t" style="left:1913.0px;top:516.6px;width:130px">1084074</span>
<div class="a" style="left:2120.9px;top:521.4px;width:1.4px;height:11px;background:#a0916c"></div>
<span class="t r" style="left:19.0px;top:545.1px;width:48px">14691</span>
<span class="t r" style="left:73.0px;top:545.1px;width:103.5px">2207283554</span>
<span class="t" style="left:183.3px;top:545.1px;width:136px;letter-spacing:-0.405px">HP-8A-K9-H1</span>
<span class="t r" style="left:322.0px;top:545.1px;width:130.5px">5</span>
<span class="t" style="left:459.0px;top:545.1px;width:200px;letter-spacing:0.1px">Продаж</span>
<span class="t" style="left:668.0px;top:545.1px;width:122.5px;letter-spacing:0.298px">22.05.2025 10:4</span>
<span class="t" style="left:795.3px;top:545.1px;width:134px;letter-spacing:0.354px">24.05.2025 11:43</span>
<span class="t" style="left:1372.3px;top:545.1px;width:106.6px;overflow:hidden;letter-spacing:0.25px">+38 (044) 000-</span>
<span class="t" style="left:1680.0px;top:545.1px;width:130px;letter-spacing:0.2px">tabletki.ua</span>
<span class="t r" style="left:1815.0px;top:545.1px;width:90px">1256011</span>
<span class="t" style="left:1913.0px;top:545.1px;width:130px">1084145</span>
<div class="a" style="left:2120.9px;top:549.9px;width:1.4px;height:11px;background:#a0916c"></div>
<span class="t r" style="left:19.0px;top:573.6px;width:48px">14692</span>
<span class="t r" style="left:73.0px;top:573.6px;width:103.5px">9513239987</span>
<span class="t" style="left:183.3px;top:573.6px;width:136px;letter-spacing:-0.541px">7X-XH-PC-87</span>
<span class="t r" style="left:322.0px;top:573.6px;width:130.5px">2</span>
<span class="t" style="left:459.0px;top:573.6px;width:200px;letter-spacing:0.1px">Продаж</span>
<span class="t" style="left:668.0px;top:573.6px;width:122.5px;letter-spacing:0.298px">22.05.2025 10:4</span>
<span class="t" style="left:795.3px;top:573.6px;width:134px;letter-spacing:0.354px">24.05.2025 11:45</span>
<span class="t" style="left:1372.3px;top:573.6px;width:106.6px;overflow:hidden;letter-spacing:0.25px">+38 (044) 000-</span>
<span class="t" style="left:1680.0px;top:573.6px;width:130px;letter-spacing:0.2px">tabletki.ua</span>
<span class="t r" style="left:1815.0px;top:573.6px;width:90px">1256012</span>
<span class="t" style="left:1913.0px;top:573.6px;width:130px">1084146</span>
<div class="a" style="left:2120.9px;top:578.4px;width:1.4px;height:11px;background:#a0916c"></div>
<span class="t r" style="left:19.0px;top:602.1px;width:48px">14693</span>
<span class="t r" style="left:73.0px;top:602.1px;width:103.5px">4135934538</span>
<span class="t" style="left:183.3px;top:602.1px;width:136px;letter-spacing:-0.322px">T6-MB-9C-43</span>
<span class="t r" style="left:322.0px;top:602.1px;width:130.5px">2</span>
<span class="t" style="left:459.0px;top:602.1px;width:200px;letter-spacing:0.1px">Продаж</span>
<span class="t" style="left:668.0px;top:602.1px;width:122.5px;letter-spacing:0.298px">22.05.2025 10:5</span>
<span class="t" style="left:795.3px;top:602.1px;width:134px;letter-spacing:0.354px">24.05.2025 11:57</span>
<span class="t" style="left:1372.3px;top:602.1px;width:106.6px;overflow:hidden;letter-spacing:0.25px">+38 (044) 000-</span>
<span class="t" style="left:1680.0px;top:602.1px;width:130px;letter-spacing:0.2px">tabletki.ua</span>
<span class="t r" style="left:1815.0px;top:602.1px;width:90px">1256022</span>
<span class="t" style="left:1913.0px;top:602.1px;width:130px">1084156</span>
<div class="a" style="left:2120.9px;top:606.9px;width:1.4px;height:11px;background:#a0916c"></div>
<span class="t r" style="left:19.0px;top:630.6px;width:48px">14694</span>
<span class="t r" style="left:73.0px;top:630.6px;width:103.5px">6716238643</span>
<span class="t" style="left:183.3px;top:630.6px;width:136px;letter-spacing:-0.213px">3C-M9-MT-45</span>
<span class="t r" style="left:322.0px;top:630.6px;width:130.5px">5</span>
<span class="t" style="left:459.0px;top:630.6px;width:200px;letter-spacing:0.1px">Продаж</span>
<span class="t" style="left:668.0px;top:630.6px;width:122.5px;letter-spacing:0.378px">22.05.2025 11:0</span>
<span class="t" style="left:795.3px;top:630.6px;width:134px;letter-spacing:0.279px">24.05.2025 12:09</span>
<span class="t" style="left:1372.3px;top:630.6px;width:106.6px;overflow:hidden;letter-spacing:0.25px">+38 (067) 495-</span>
<span class="t" style="left:1680.0px;top:630.6px;width:130px;letter-spacing:0.2px">tabletki.ua</span>
<span class="t r" style="left:1815.0px;top:630.6px;width:90px">1256030</span>
<span class="t" style="left:1913.0px;top:630.6px;width:130px">1084163</span>
<div class="a" style="left:2120.9px;top:635.4px;width:1.4px;height:11px;background:#a0916c"></div>
<span class="t r" style="left:19.0px;top:659.1px;width:48px">14695</span>
<span class="t r" style="left:73.0px;top:659.1px;width:103.5px">1853472527</span>
<span class="t" style="left:183.3px;top:659.1px;width:136px;letter-spacing:0.0px">76-14-4X-81</span>
<span class="t r" style="left:322.0px;top:659.1px;width:130.5px">1</span>
<span class="t" style="left:459.0px;top:659.1px;width:200px;letter-spacing:0.1px">Продаж</span>
<span class="t" style="left:668.0px;top:659.1px;width:122.5px;letter-spacing:0.378px">22.05.2025 11:2</span>
<span class="t" style="left:795.3px;top:659.1px;width:134px;letter-spacing:0.279px">24.05.2025 12:23</span>
<span class="t" style="left:1372.3px;top:659.1px;width:106.6px;overflow:hidden;letter-spacing:0.25px">+38 (044) 000-</span>
<span class="t" style="left:1680.0px;top:659.1px;width:130px;letter-spacing:0.2px">tabletki.ua</span>
<span class="t r" style="left:1815.0px;top:659.1px;width:90px">1256041</span>
<span class="t" style="left:1913.0px;top:659.1px;width:130px">1084171</span>
<div class="a" style="left:2120.9px;top:663.9px;width:1.4px;height:11px;background:#a0916c"></div>
<span class="t r" style="left:19.0px;top:687.6px;width:48px">14696</span>
<span class="t r" style="left:73.0px;top:687.6px;width:103.5px">3177073496</span>
<span class="t" style="left:183.3px;top:687.6px;width:136px;letter-spacing:-0.429px">MH-3H-MC-92</span>
<span class="t r" style="left:322.0px;top:687.6px;width:130.5px">1</span>
<span class="t" style="left:459.0px;top:687.6px;width:200px;letter-spacing:0.1px">Продаж</span>
<span class="t" style="left:668.0px;top:687.6px;width:122.5px;letter-spacing:0.378px">22.05.2025 11:4</span>
<span class="t" style="left:795.3px;top:687.6px;width:134px;letter-spacing:0.279px">24.05.2025 12:47</span>
<span class="t" style="left:1372.3px;top:687.6px;width:106.6px;overflow:hidden;letter-spacing:0.25px">+38 (044) 000-</span>
<span class="t" style="left:1680.0px;top:687.6px;width:130px;letter-spacing:0.2px">tabletki.ua</span>
<span class="t r" style="left:1815.0px;top:687.6px;width:90px">1256058</span>
<span class="t" style="left:1913.0px;top:687.6px;width:130px">1084188</span>
<div class="a" style="left:2120.9px;top:692.4px;width:1.4px;height:11px;background:#a0916c"></div>
<span class="t r" style="left:19.0px;top:716.1px;width:48px">14697</span>
<span class="t r" style="left:73.0px;top:716.1px;width:103.5px">5898238237</span>
<span class="t" style="left:183.3px;top:716.1px;width:136px;letter-spacing:-0.597px">PB-KX-33-C4</span>
<span class="t r" style="left:322.0px;top:716.1px;width:130.5px">1</span>
<span class="t" style="left:459.0px;top:716.1px;width:200px;letter-spacing:0.1px">Продаж</span>
<span class="t" style="left:668.0px;top:716.1px;width:122.5px;letter-spacing:0.298px">22.05.2025 12:2</span>
<span class="t" style="left:795.3px;top:716.1px;width:134px;letter-spacing:0.279px">24.05.2025 13:27</span>
<span class="t" style="left:1372.3px;top:716.1px;width:106.6px;overflow:hidden;letter-spacing:0.25px">+38 (044) 000-</span>
<span class="t" style="left:1680.0px;top:716.1px;width:130px;letter-spacing:0.2px">tabletki.ua</span>
<span class="t r" style="left:1815.0px;top:716.1px;width:90px">1256089</span>
<span class="t" style="left:1913.0px;top:716.1px;width:130px">1084214</span>
<div class="a" style="left:2120.9px;top:720.9px;width:1.4px;height:11px;background:#a0916c"></div>
<span class="t r" style="left:19.0px;top:744.6px;width:48px">14698</span>
<span class="t r" style="left:73.0px;top:744.6px;width:103.5px">5519416248</span>
<span class="t" style="left:183.3px;top:744.6px;width:136px;letter-spacing:-0.08px">8C-07-M4-64</span>
<span class="t r" style="left:322.0px;top:744.6px;width:130.5px">1</span>
<span class="t" style="left:459.0px;top:744.6px;width:200px;letter-spacing:0.1px">Продаж</span>
<span class="t" style="left:668.0px;top:744.6px;width:122.5px;letter-spacing:0.298px">22.05.2025 12:5</span>
<span class="t" style="left:795.3px;top:744.6px;width:134px;letter-spacing:0.279px">24.05.2025 13:53</span>
<span class="t" style="left:1372.3px;top:744.6px;width:106.6px;overflow:hidden;letter-spacing:0.25px">+38 (044) 000-</span>
<span class="t" style="left:1680.0px;top:744.6px;width:130px;letter-spacing:0.2px">tabletki.ua</span>
<span class="t r" style="left:1815.0px;top:744.6px;width:90px">1256111</span>
<span class="t" style="left:1913.0px;top:744.6px;width:130px">1084232</span>
<div class="a" style="left:2120.9px;top:749.4px;width:1.4px;height:11px;background:#a0916c"></div>
<span class="t r" style="left:19.0px;top:773.1px;width:48px">14699</span>
<span class="t r" style="left:73.0px;top:773.1px;width:103.5px">4413511763</span>
<span class="t" style="left:183.3px;top:773.1px;width:136px;letter-spacing:-0.163px">38-X8-4X-83</span>
<span class="t r" style="left:322.0px;top:773.1px;width:130.5px">1</span>
<span class="t" style="left:459.0px;top:773.1px;width:200px;letter-spacing:0.1px">Продаж</span>
<span class="t" style="left:668.0px;top:773.1px;width:122.5px;letter-spacing:0.298px">22.05.2025 14:2</span>
<span class="t" style="left:795.3px;top:773.1px;width:134px;letter-spacing:0.279px">24.05.2025 15:22</span>
<span class="t" style="left:1372.3px;top:773.1px;width:106.6px;overflow:hidden;letter-spacing:0.25px">+38 (044) 000-</span>
<span class="t" style="left:1680.0px;top:773.1px;width:130px;letter-spacing:0.2px">tabletki.ua</span>
<span class="t r" style="left:1815.0px;top:773.1px;width:90px">1256165</span>
<span class="t" style="left:1913.0px;top:773.1px;width:130px">1084276</span>
<div class="a" style="left:2120.9px;top:777.9px;width:1.4px;height:11px;background:#a0916c"></div>
<span class="t r" style="left:19.0px;top:801.6px;width:48px">14700</span>
<span class="t r" style="left:73.0px;top:801.6px;width:103.5px">8958324963</span>
<span class="t" style="left:183.3px;top:801.6px;width:136px;letter-spacing:-0.297px">38-CA-9X-X6</span>
<span class="t r" style="left:322.0px;top:801.6px;width:130.5px">1</span>
<span class="t" style="left:459.0px;top:801.6px;width:200px;letter-spacing:0.1px">Продаж</span>
<span class="t" style="left:668.0px;top:801.6px;width:122.5px;letter-spacing:0.298px">22.05.2025 14:5</span>
<span class="t" style="left:795.3px;top:801.6px;width:134px;letter-spacing:0.279px">24.05.2025 15:58</span>
<span class="t" style="left:1372.3px;top:801.6px;width:106.6px;overflow:hidden;letter-spacing:0.25px">+38 (044) 000-</span>
<span class="t" style="left:1680.0px;top:801.6px;width:130px;letter-spacing:0.2px">tabletki.ua</span>
<span class="t r" style="left:1815.0px;top:801.6px;width:90px">1256186</span>
<span class="t" style="left:1913.0px;top:801.6px;width:130px">1084295</span>
<div class="a" style="left:2120.9px;top:806.4px;width:1.4px;height:11px;background:#a0916c"></div>
<span class="t r" style="left:19.0px;top:830.0px;width:48px">14701</span>
<span class="t r" style="left:73.0px;top:830.0px;width:103.5px">3358735052</span>
<span class="t" style="left:183.3px;top:830.0px;width:136px;letter-spacing:-0.432px">CC-P1-C9-C2</span>
<span class="t r" style="left:322.0px;top:830.0px;width:130.5px">1</span>
<span class="t" style="left:459.0px;top:830.0px;width:200px;letter-spacing:0.1px">Продаж</span>
<span class="t" style="left:668.0px;top:830.0px;width:122.5px;letter-spacing:0.298px">22.05.2025 15:3</span>
<span class="t" style="left:795.3px;top:830.0px;width:134px;letter-spacing:0.279px">24.05.2025 16:36</span>
<span class="t" style="left:1372.3px;top:830.0px;width:106.6px;overflow:hidden;letter-spacing:0.25px">+38 (044) 000-</span>
<span class="t" style="left:1680.0px;top:830.0px;width:130px;letter-spacing:0.2px">tabletki.ua</span>
<span class="t r" style="left:1815.0px;top:830.0px;width:90px">1256206</span>
<span class="t" style="left:1913.0px;top:830.0px;width:130px">1084313</span>
<div class="a" style="left:2120.9px;top:834.8px;width:1.4px;height:11px;background:#a0916c"></div>
<span class="t r" style="left:19.0px;top:858.5px;width:48px">14702</span>
<span class="t r" style="left:73.0px;top:858.5px;width:103.5px">5045267617</span>
<span class="t" style="left:183.3px;top:858.5px;width:136px;letter-spacing:-0.322px">P0-9T-CM-T3</span>
<span class="t r" style="left:322.0px;top:858.5px;width:130.5px">1</span>
<span class="t" style="left:459.0px;top:858.5px;width:200px;letter-spacing:0.1px">Продаж</span>
<span class="t" style="left:668.0px;top:858.5px;width:122.5px;letter-spacing:0.298px">22.05.2025 15:5</span>
<span class="t" style="left:795.3px;top:858.5px;width:134px;letter-spacing:0.279px">24.05.2025 16:50</span>
<span class="t" style="left:1372.3px;top:858.5px;width:106.6px;overflow:hidden;letter-spacing:0.25px">+38 (044) 000-</span>
<span class="t" style="left:1680.0px;top:858.5px;width:130px;letter-spacing:0.2px">tabletki.ua</span>
<span class="t r" style="left:1815.0px;top:858.5px;width:90px">1256219</span>
<span class="t" style="left:1913.0px;top:858.5px;width:130px">1084321</span>
<div class="a" style="left:2120.9px;top:863.3px;width:1.4px;height:11px;background:#a0916c"></div>
<span class="t r" style="left:19.0px;top:887.0px;width:48px">14703</span>
<span class="t r" style="left:73.0px;top:887.0px;width:103.5px">7751271519</span>
<span class="t" style="left:183.3px;top:887.0px;width:136px;letter-spacing:-0.243px">XK-T8-52-16</span>
<span class="t r" style="left:322.0px;top:887.0px;width:130.5px">1</span>
<span class="t" style="left:459.0px;top:887.0px;width:200px;letter-spacing:0.1px">Продаж</span>
<span class="t" style="left:668.0px;top:887.0px;width:122.5px;letter-spacing:0.298px">22.05.2025 16:4</span>
<span class="t" style="left:795.3px;top:887.0px;width:134px;letter-spacing:0.279px">24.05.2025 17:48</span>
<span class="t" style="left:1372.3px;top:887.0px;width:106.6px;overflow:hidden;letter-spacing:0.25px">+38 (044) 000-</span>
<span class="t" style="left:1680.0px;top:887.0px;width:130px;letter-spacing:0.2px">tabletki.ua</span>
<span class="t r" style="left:1815.0px;top:887.0px;width:90px">1256244</span>
<span class="t" style="left:1913.0px;top:887.0px;width:130px">1084343</span>
<div class="a" style="left:2120.9px;top:891.8px;width:1.4px;height:11px;background:#a0916c"></div>
<span class="t r" style="left:19.0px;top:915.5px;width:48px">14704</span>
<span class="t r" style="left:73.0px;top:915.5px;width:103.5px">6734488450</span>
<span class="t" style="left:183.3px;top:915.5px;width:136px;letter-spacing:-0.053px">A2-1B-A4-55</span>
<span class="t r" style="left:322.0px;top:915.5px;width:130.5px">1</span>
<span class="t" style="left:459.0px;top:915.5px;width:200px;letter-spacing:0.1px">Продаж</span>
<span class="t" style="left:668.0px;top:915.5px;width:122.5px;letter-spacing:0.298px">22.05.2025 17:0</span>
<span class="t" style="left:795.3px;top:915.5px;width:134px;letter-spacing:0.279px">24.05.2025 18:04</span>
<span class="t" style="left:1372.3px;top:915.5px;width:106.6px;overflow:hidden;letter-spacing:0.25px">+38 (044) 000-</span>
<span class="t" style="left:1680.0px;top:915.5px;width:130px;letter-spacing:0.2px">tabletki.ua</span>
<span class="t r" style="left:1815.0px;top:915.5px;width:90px">1256248</span>
<span class="t" style="left:1913.0px;top:915.5px;width:130px">1084346</span>
<div class="a" style="left:2120.9px;top:920.3px;width:1.4px;height:11px;background:#a0916c"></div>
<span class="t r" style="left:19.0px;top:944.0px;width:48px">14705</span>
<span class="t r" style="left:73.0px;top:944.0px;width:103.5px">6122876519</span>
<span class="t" style="left:183.3px;top:944.0px;width:136px;letter-spacing:-0.652px">X5-BX-7E-K4</span>
<span class="t r" style="left:322.0px;top:944.0px;width:130.5px">1</span>
<span class="t" style="left:459.0px;top:944.0px;width:200px;letter-spacing:0.1px">Продаж</span>
<span class="t" style="left:668.0px;top:944.0px;width:122.5px;letter-spacing:0.298px">22.05.2025 17:5</span>
<span class="t" style="left:795.3px;top:944.0px;width:134px;letter-spacing:0.279px">24.05.2025 18:51</span>
<span class="t" style="left:1372.3px;top:944.0px;width:106.6px;overflow:hidden;letter-spacing:0.25px">+38 (044) 000-</span>
<span class="t" style="left:1680.0px;top:944.0px;width:130px;letter-spacing:0.2px">tabletki.ua</span>
<span class="t r" style="left:1815.0px;top:944.0px;width:90px">1256260</span>
<span class="t" style="left:1913.0px;top:944.0px;width:130px">1084356</span>
<div class="a" style="left:2120.9px;top:948.8px;width:1.4px;height:11px;background:#a0916c"></div>
<span class="t r" style="left:19.0px;top:972.5px;width:48px">14706</span>
<span class="t r" style="left:73.0px;top:972.5px;width:103.5px">9534063552</span>
<span class="t" style="left:183.3px;top:972.5px;width:136px;letter-spacing:-0.514px">CP-TP-7X-87</span>
<span class="t r" style="left:322.0px;top:972.5px;width:130.5px">1</span>
<span class="t" style="left:459.0px;top:972.5px;width:200px;letter-spacing:0.1px">Продаж</span>
<span class="t" style="left:668.0px;top:972.5px;width:122.5px;letter-spacing:0.298px">22.05.2025 18:5</span>
<span class="t" style="left:795.3px;top:972.5px;width:134px;letter-spacing:0.279px">24.05.2025 19:59</span>
<span class="t" style="left:1372.3px;top:972.5px;width:106.6px;overflow:hidden;letter-spacing:0.25px">+38 (044) 000-</span>
<span class="t" style="left:1680.0px;top:972.5px;width:130px;letter-spacing:0.2px">tabletki.ua</span>
<span class="t r" style="left:1815.0px;top:972.5px;width:90px">1256298</span>
<span class="t" style="left:1913.0px;top:972.5px;width:130px">1084393</span>
<div class="a" style="left:2120.9px;top:977.3px;width:1.4px;height:11px;background:#a0916c"></div>
<span class="t r" style="left:19.0px;top:1001.0px;width:48px">14707</span>
<span class="t r" style="left:73.0px;top:1001.0px;width:103.5px">1036956491</span>
<span class="t" style="left:183.3px;top:1001.0px;width:136px;letter-spacing:-0.46px">B4-BX-04-M0</span>
<span class="t r" style="left:322.0px;top:1001.0px;width:130.5px">1</span>
<span class="t" style="left:459.0px;top:1001.0px;width:200px;letter-spacing:0.1px">Продаж</span>
<span class="t" style="left:668.0px;top:1001.0px;width:122.5px;letter-spacing:0.298px">22.05.2025 19:5</span>
<span class="t" style="left:795.3px;top:1001.0px;width:134px;letter-spacing:0.279px">24.05.2025 20:55</span>
<span class="t" style="left:1372.3px;top:1001.0px;width:106.6px;overflow:hidden;letter-spacing:0.25px">+38 (044) 000-</span>
<span class="t" style="left:1680.0px;top:1001.0px;width:130px;letter-spacing:0.2px">tabletki.ua</span>
<span class="t r" style="left:1815.0px;top:1001.0px;width:90px">1256320</span>
<span class="t" style="left:1913.0px;top:1001.0px;width:130px">1084414</span>
<div class="a" style="left:2120.9px;top:1005.8px;width:1.4px;height:11px;background:#a0916c"></div>
<span class="t r" style="left:19.0px;top:1029.5px;width:48px">14708</span>
<span class="t r" style="left:73.0px;top:1029.5px;width:103.5px">5867844611</span>
<span class="t" style="left:183.3px;top:1029.5px;width:136px;letter-spacing:-0.624px">BA-B0-HE-B4</span>
<span class="t r" style="left:322.0px;top:1029.5px;width:130.5px">1</span>
<span class="t" style="left:459.0px;top:1029.5px;width:200px;letter-spacing:0.1px">Продаж</span>
<span class="t" style="left:668.0px;top:1029.5px;width:122.5px;letter-spacing:0.298px">22.05.2025 20:1</span>
<span class="t" style="left:795.3px;top:1029.5px;width:134px;letter-spacing:0.354px">24.05.2025 21:11</span>
<span class="t" style="left:1372.3px;top:1029.5px;width:106.6px;overflow:hidden;letter-spacing:0.25px">+38 (044) 000-</span>
<span class="t" style="left:1680.0px;top:1029.5px;width:130px;letter-spacing:0.2px">tabletki.ua</span>
<span class="t r" style="left:1815.0px;top:1029.5px;width:90px">1256322</span>
<span class="t" style="left:1913.0px;top:1029.5px;width:130px">1084416</span>
<div class="a" style="left:2120.9px;top:1034.3px;width:1.4px;height:11px;background:#a0916c"></div>
<svg class="a" style="left:6px;top:377.4px" width="8" height="14" viewBox="0 0 8 14"><path d="M0.300 0.500L7.600 7 0.300 13.500z" fill="#0a0a0a"/></svg>
</div>
<div class="a" style="left:2128.3px;top:197.5px;width:2px;height:1044.5px;background:#b1b1b1"></div>
<div class="a" style="left:2130.2px;top:197.5px;width:23px;height:1044px;background:#ababab"></div>
<svg class="a" style="left:0;top:0;pointer-events:none" width="2159" height="1312" viewBox="0 0 2159 1312" fill="none"><rect x="2130.2" y="223.8" width="22.200000000000273" height="23.399999999999977" stroke="none" stroke-width="0" fill="#939393" rx="0"/><path d="M2137.2 215.300L2141.300 209.800 2145.400 215.300" stroke="#4a4a4a" stroke-width="3.200" fill="none"/><path d="M2137.200 1226L2141.300 1231.500 2145.400 1226" stroke="#4a4a4a" stroke-width="3.200" fill="none"/></svg>
<div class="a" style="left:6px;top:1241.8px;width:2147.2px;height:27.2px;background:#ababab"></div>
<svg class="a" style="left:0;top:0;pointer-events:none" width="2159" height="1312" viewBox="0 0 2159 1312" fill="none"><rect x="8.3" y="1243.3" width="22.7" height="24.200000000000045" stroke="#909090" stroke-width="1.4" fill="#a7a7a7" rx="0"/><rect x="132.3" y="1243.3" width="22.69999999999999" height="24.200000000000045" stroke="#909090" stroke-width="1.4" fill="#a7a7a7" rx="0"/><rect x="160" y="1243.3" width="22.30000000000001" height="24.200000000000045" stroke="#909090" stroke-width="1.4" fill="#a7a7a7" rx="0"/></svg>
<svg class="a" style="left:12px;top:1250px" width="15" height="11" viewBox="0 0 15 11" fill="#3a3a3a"><rect x="0.500" y="0" width="2" height="11"/><path d="M8.500 0v11L3 5.500z"/><path d="M14.500 0v11L9 5.500z"/></svg>
<svg class="a" style="left:136px;top:1250px" width="15" height="11" viewBox="0 0 15 11" fill="#3a3a3a"><rect x="12.500" y="0" width="2" height="11"/><path d="M6.500 0v11L12 5.500z"/><path d="M0.500 0v11L6 5.500z"/></svg>
<svg class="a" style="left:164.800px;top:1250.400px" width="11.400" height="10.200" viewBox="0 0 11.400 10.200"><path d="M0 0h11.400v2.600H0zM1.400 3.200h8.600L7.700 5.800v4.400H3.700V5.800z" fill="#c66f18"/></svg>
<span class="a" style="left:42.70px;top:1245.50px;font-size:16.2px;line-height:20px;color:#141414;font-weight:400;transform:scaleX(0.9826);transform-origin:0 0;-webkit-text-stroke:0.25px currentColor;">13 из 1943</span>
<svg class="a" style="left:266px;top:1249px" width="9" height="13" viewBox="0 0 9 13"><path d="M7.200 2L2.200 6.500 7.200 11" fill="none" stroke="#4a4a4a" stroke-width="3"/></svg>
<svg class="a" style="left:2110px;top:1249px" width="9" height="13" viewBox="0 0 9 13"><path d="M1.800 2L6.800 6.500 1.800 11" fill="none" stroke="#4a4a4a" stroke-width="3"/></svg>
<div class="a" style="left:285px;top:1243px;width:1371px;height:25px;background:#949494"></div>
<div class="a" style="left:1px;top:1273.5px;width:2158px;height:40px;background:#aaaaaa"></div>
<svg class="a" style="left:0;top:0;pointer-events:none" width="2159" height="1312" viewBox="0 0 2159 1312" fill="none"><rect x="5.6" y="1279.8" width="185.4" height="40.200000000000045" stroke="#1c1c1c" stroke-width="1.6" fill="#adadad" rx="0"/><rect x="195.6" y="1279.8" width="186.00000000000003" height="40.200000000000045" stroke="#295a96" stroke-width="1.6" fill="#bb9778" rx="0"/></svg>
<span class="a" style="left:8.70px;top:1285.30px;font-size:16.2px;line-height:20px;color:#141414;font-weight:400;transform:scaleX(1.0176);transform-origin:0 0;-webkit-text-stroke:0.25px currentColor;">Головна</span>
<span class="a" style="left:198.20px;top:1285.30px;font-size:16.2px;line-height:20px;color:#141414;font-weight:400;transform:scaleX(1.0323);transform-origin:0 0;-webkit-text-stroke:0.25px currentColor;">Замовлення від поку ...</span>
<div class="a" style="left:1430.8px;top:388px;width:6.2px;height:537px;background:#fff;overflow:hidden">
<div class="a" style="left:0;top:-20.65px;width:7px;height:1.5px;background:#c4c4c4"></div>
<span class="t" style="left:-52.8px;top:-15.9px;color:#000;letter-spacing:.25px">+38 (044) 000</span>
<div class="a" style="left:0;top:7.85px;width:7px;height:1.5px;background:#c4c4c4"></div>
<span class="t" style="left:-52.8px;top:12.6px;color:#000;letter-spacing:.25px">+38 (044) 000</span>
<div class="a" style="left:0;top:36.35px;width:7px;height:1.5px;background:#c4c4c4"></div>
<span class="t" style="left:-52.8px;top:41.1px;color:#000;letter-spacing:.25px">+38 (044) 000</span>
<div class="a" style="left:0;top:64.85px;width:7px;height:1.5px;background:#c4c4c4"></div>
<span class="t" style="left:-52.8px;top:69.6px;color:#000;letter-spacing:.25px">+38 (044) 000</span>
<div class="a" style="left:0;top:93.35px;width:7px;height:1.5px;background:#c4c4c4"></div>
<span class="t" style="left:-52.8px;top:98.1px;color:#000;letter-spacing:.25px">+38 (044) 000</span>
<div class="a" style="left:0;top:121.85px;width:7px;height:1.5px;background:#c4c4c4"></div>
<span class="t" style="left:-52.8px;top:126.6px;color:#000;letter-spacing:.25px">+38 (044) 000</span>
<div class="a" style="left:0;top:150.35px;width:7px;height:1.5px;background:#c4c4c4"></div>
<span class="t" style="left:-52.8px;top:155.1px;color:#000;letter-spacing:.25px">+38 (044) 000</span>
<div class="a" style="left:0;top:178.85px;width:7px;height:1.5px;background:#c4c4c4"></div>
<span class="t" style="left:-52.8px;top:183.6px;color:#000;letter-spacing:.25px">+38 (044) 000</span>
<div class="a" style="left:0;top:207.35px;width:7px;height:1.5px;background:#c4c4c4"></div>
<span class="t" style="left:-52.8px;top:212.1px;color:#000;letter-spacing:.25px">+38 (044) 000</span>
<div class="a" style="left:0;top:235.85px;width:7px;height:1.5px;background:#c4c4c4"></div>
<span class="t" style="left:-52.8px;top:240.6px;color:#000;letter-spacing:.25px">+38 (044) 000</span>
<div class="a" style="left:0;top:264.35px;width:7px;height:1.5px;background:#c4c4c4"></div>
<span class="t" style="left:-52.8px;top:269.1px;color:#000;letter-spacing:.25px">+38 (044) 000</span>
<div class="a" style="left:0;top:292.85px;width:7px;height:1.5px;background:#c4c4c4"></div>
<span class="t" style="left:-52.8px;top:297.6px;color:#000;letter-spacing:.25px">+38 (044) 000</span>
<div class="a" style="left:0;top:321.35px;width:7px;height:1.5px;background:#c4c4c4"></div>
<span class="t" style="left:-52.8px;top:326.1px;color:#000;letter-spacing:.25px">+38 (044) 000</span>
<div class="a" style="left:0;top:349.85px;width:7px;height:1.5px;background:#c4c4c4"></div>
<span class="t" style="left:-52.8px;top:354.6px;color:#000;letter-spacing:.25px">+38 (044) 000</span>
<div class="a" style="left:0;top:378.35px;width:7px;height:1.5px;background:#c4c4c4"></div>
<span class="t" style="left:-52.8px;top:383.1px;color:#000;letter-spacing:.25px">+38 (044) 000</span>
<div class="a" style="left:0;top:406.85px;width:7px;height:1.5px;background:#c4c4c4"></div>
<span class="t" style="left:-52.8px;top:411.6px;color:#000;letter-spacing:.25px">+38 (044) 000</span>
<div class="a" style="left:0;top:435.35px;width:7px;height:1.5px;background:#c4c4c4"></div>
<span class="t" style="left:-52.8px;top:440.1px;color:#000;letter-spacing:.25px">+38 (067) 495</span>
<div class="a" style="left:0;top:463.85px;width:7px;height:1.5px;background:#c4c4c4"></div>
<span class="t" style="left:-52.8px;top:468.6px;color:#000;letter-spacing:.25px">+38 (044) 000</span>
<div class="a" style="left:0;top:492.35px;width:7px;height:1.5px;background:#c4c4c4"></div>
<span class="t" style="left:-52.8px;top:497.1px;color:#000;letter-spacing:.25px">+38 (044) 000</span>
<div class="a" style="left:0;top:520.85px;width:7px;height:1.5px;background:#c4c4c4"></div>
<span class="t" style="left:-52.8px;top:525.6px;color:#000;letter-spacing:.25px">+38 (044) 000</span>
</div>
<div class="a" style="left:1008px;top:388px;width:422.5px;height:537.5px;background:#f0f0f0"></div>
<div class="a" style="left:1008.5px;top:388px;width:3px;height:537px;background:#b0b0b0"></div>
<div class="a" style="left:1011.3px;top:388px;width:419px;height:46px;background:#fff"></div>
<svg class="a" style="left:0;top:0;pointer-events:none" width="2159" height="1312" viewBox="0 0 2159 1312" fill="none"><rect x="1007.6" y="387.6" width="422.9999999999999" height="537.8" stroke="#444" stroke-width="1.2" fill="none" rx="0"/></svg>
<svg class="a" style="left:1020.9px;top:397.6px" width="22.4" height="24.8" viewBox="-0.2 -0.2 22.4 24.8"><g fill="#ff6d00">
<path d="M8.800 0h7q2.500 0 2.500 2.300L17.900 6.100H6.700L6.300 2.300Q6.300 0 8.800 0z"/>
<path d="M8.800 24.400h7q2.500 0 2.500-2.300l-0.400-3.800H6.700L6.300 22.100q0 2.300 2.500 2.300z"/>
<path d="M0.400 9q0-2.900 2.700-2.900h4.500v12.200H3.100Q0.400 18.300 0.400 15.400z"/>
<path d="M17.800 6.100h1.800q2.400 0 2.400 2.300v0.500q0 2.200-2.400 2.200h-1.100l-0.700-2z"/>
<path d="M17.800 18.300h1.800q2.400 0 2.400-2.300v-0.500q0-2.200-2.400-2.200h-1.100l-0.700 2z"/>
</g></svg>
<span class="a" style="left:1049.20px;top:399.50px;font-size:18.4px;line-height:24px;color:#000;font-weight:400;transform:scaleX(0.9414);transform-origin:0 0;">Редагування даних</span>
<svg class="a" style="left:1387.500px;top:402.500px" width="16" height="16" viewBox="0 0 16 16"><path d="M0.500 0.500l15 15M15.500 0.500l-15 15" stroke="#111" stroke-width="1.300"/></svg>
<span class="a" style="left:1021.70px;top:450.20px;font-size:16.4px;line-height:20px;color:#000;font-weight:400;transform:scaleX(1.0054);transform-origin:0 0;-webkit-text-stroke:0.25px currentColor;">Код замовлення</span>
<svg class="a" style="left:0;top:0;pointer-events:none" width="2159" height="1312" viewBox="0 0 2159 1312" fill="none"><path d="M1248 410.6H1263" stroke="#111" stroke-width="1.3"/><rect x="1317.6" y="403.6" width="13.800000000000182" height="13.799999999999955" stroke="#111" stroke-width="1.3" fill="none" rx="0"/><rect x="1023.7" y="477.2" width="390.5999999999999" height="29.600000000000023" stroke="#7a7a7a" stroke-width="1.5" fill="#e1e1e1" rx="0"/><rect x="1025.4" y="478.9" width="387.1999999999998" height="26.200000000000045" stroke="#f6f6f6" stroke-width="1.2" fill="none" rx="0"/></svg>
<span class="a" style="left:1300px;width:110px;text-align:right;top:482.0px;font-size:16.3px;line-height:20px;color:#000;letter-spacing:.1px">7993957626</span>
<span class="a" style="left:1021.70px;top:517.70px;font-size:16.4px;line-height:20px;color:#000;font-weight:400;transform:scaleX(0.9663);transform-origin:0 0;-webkit-text-stroke:0.25px currentColor;">Номер замовлення</span>
<svg class="a" style="left:0;top:0;pointer-events:none" width="2159" height="1312" viewBox="0 0 2159 1312" fill="none"><rect x="1023.7" y="544.7" width="390.5999999999999" height="29.59999999999991" stroke="#7a7a7a" stroke-width="1.5" fill="#e1e1e1" rx="0"/><rect x="1025.4" y="546.4" width="387.1999999999998" height="26.200000000000045" stroke="#f6f6f6" stroke-width="1.2" fill="none" rx="0"/></svg>
<span class="a" style="left:1027.5px;top:549.5px;font-size:16.3px;line-height:20px;color:#000;letter-spacing:.2px">61-H4-2T-46</span>
<span class="a" style="left:1021.70px;top:585.20px;font-size:16.4px;line-height:20px;color:#000;font-weight:400;transform:scaleX(1.0105);transform-origin:0 0;-webkit-text-stroke:0.25px currentColor;">Рецепт</span>
<svg class="a" style="left:0;top:0;pointer-events:none" width="2159" height="1312" viewBox="0 0 2159 1312" fill="none"><rect x="1023.7" y="612.2" width="390.5999999999999" height="29.59999999999991" stroke="#7a7a7a" stroke-width="1.5" fill="#e1e1e1" rx="0"/><rect x="1025.4" y="613.9" width="387.1999999999998" height="26.200000000000045" stroke="#f6f6f6" stroke-width="1.2" fill="none" rx="0"/></svg>
<span class="a" style="left:1021.70px;top:652.70px;font-size:16.4px;line-height:20px;color:#000;font-weight:400;transform:scaleX(0.9633);transform-origin:0 0;-webkit-text-stroke:0.25px currentColor;">ПІБ</span>
<svg class="a" style="left:0;top:0;pointer-events:none" width="2159" height="1312" viewBox="0 0 2159 1312" fill="none"><rect x="1023.7" y="679.7" width="390.5999999999999" height="29.59999999999991" stroke="#7a7a7a" stroke-width="1.5" fill="#e1e1e1" rx="0"/><rect x="1025.4" y="681.4" width="387.1999999999998" height="26.200000000000045" stroke="#f6f6f6" stroke-width="1.2" fill="none" rx="0"/></svg>
<span class="a" style="left:1021.70px;top:720.20px;font-size:16.4px;line-height:20px;color:#000;font-weight:400;transform:scaleX(0.9868);transform-origin:0 0;-webkit-text-stroke:0.25px currentColor;">Телефон</span>
<svg class="a" style="left:0;top:0;pointer-events:none" width="2159" height="1312" viewBox="0 0 2159 1312" fill="none"><rect x="1023.7" y="747.2" width="390.5999999999999" height="29.59999999999991" stroke="#7a7a7a" stroke-width="1.5" fill="#e1e1e1" rx="0"/><rect x="1025.4" y="748.9" width="387.1999999999998" height="26.200000000000045" stroke="#f6f6f6" stroke-width="1.2" fill="none" rx="0"/></svg>
<span class="a" style="left:1027.5px;top:752.0px;font-size:16.3px;line-height:20px;color:#000;letter-spacing:.2px">+38 (044) 000-1159</span>
<span class="a" style="left:1021.70px;top:787.70px;font-size:16.4px;line-height:20px;color:#000;font-weight:400;transform:scaleX(1.0019);transform-origin:0 0;-webkit-text-stroke:0.25px currentColor;">Термін придатності</span>
<svg class="a" style="left:0;top:0;pointer-events:none" width="2159" height="1312" viewBox="0 0 2159 1312" fill="none"><rect x="1023.7" y="814.7" width="390.5999999999999" height="29.59999999999991" stroke="#7a7a7a" stroke-width="1.5" fill="#fff" rx="0"/></svg>
<span class="a" style="left:1027.5px;top:819.5px;font-size:16.3px;line-height:20px;color:#000;letter-spacing:.2px">15.08.2025 09:24:21</span>
<svg class="a" style="left:1394px;top:825.5px" width="14" height="9" viewBox="0 0 14 9"><path d="M1 1.200L7 7.200 13 1.200" fill="none" stroke="#444" stroke-width="1.500"/></svg>
<svg class="a" style="left:0;top:0;pointer-events:none" width="2159" height="1312" viewBox="0 0 2159 1312" fill="none"><path d="M1008.5 860.7H1430" stroke="#a0a0a0" stroke-width="1.5"/><rect x="1156.7" y="878.5" width="114.0" height="31.600000000000023" stroke="#0078d7" stroke-width="2.6" fill="#e1e1e1" rx="0"/><rect x="1160" y="881.800" width="107.400" height="25" fill="none" stroke="#111" stroke-width="1.400" stroke-dasharray="1.500 1.500"/></svg>
<span class="a" style="left:1176.20px;top:883.60px;font-size:16.4px;line-height:20px;color:#000;font-weight:400;transform:scaleX(1.0435);transform-origin:0 0;-webkit-text-stroke:0.25px currentColor;">Зберегти</span>
<svg class="a" style="left:0;top:0;pointer-events:none" width="2159" height="1312" viewBox="0 0 2159 1312" fill="none"><rect x="1297.3" y="877.9" width="115.40000000000009" height="32.80000000000007" stroke="#adadad" stroke-width="1.5" fill="#e1e1e1" rx="0"/></svg>
<span class="a" style="left:1311.20px;top:883.60px;font-size:16.4px;line-height:20px;color:#000;font-weight:400;transform:scaleX(1.0415);transform-origin:0 0;-webkit-text-stroke:0.25px currentColor;">Скасувати</span>
<svg class="a" style="left:0;top:0;pointer-events:none" width="2159" height="1312" viewBox="0 0 2159 1312" fill="none"><rect x="1139.5" y="866.4" width="284.29999999999995" height="54.60000000000002" stroke="#ff0000" stroke-width="3.9" fill="none" rx="2"/></svg>
</body></html>
